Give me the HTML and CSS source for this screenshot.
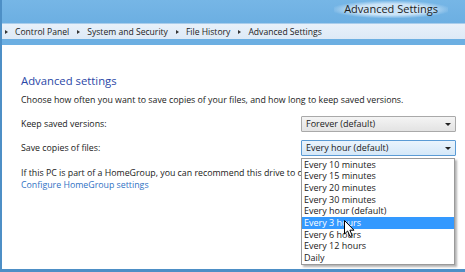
FILE: index.html
```
<!DOCTYPE html>
<html lang="en">
<head>
  <meta charset="UTF-8">
  <title>Advanced Settings</title>
  <link rel="stylesheet" href="styles.css">
</head>
<body>
  <div class="window">
    <div class="titlebar">
      <div class="title">Advanced Settings</div>
    </div>
    <div class="crumbs">
      <span class="arrow"></span><span>Control Panel</span>
      <span class="arrow"></span><span>System and Security</span>
      <span class="arrow"></span><span>File History</span>
      <span class="arrow"></span><span>Advanced Settings</span>
    </div>
    <div class="strip"></div>

    <div class="content">
      <h1>Advanced settings</h1>
      <p class="intro">Choose how often you want to save copies of your files, and how long to keep saved versions.</p>

      <div class="row">
        <span class="label">Keep saved versions:</span>
        <div class="select">Forever (default)<span class="caret"></span></div>
      </div>

      <div class="row">
        <span class="label">Save copies of files:</span>
        <div class="select open">Every hour (default)<span class="caret"></span>
          <!-- open dropdown, drawn over the text below -->
          <ul class="list">
            <li>Every 10 minutes</li>
            <li>Every 15 minutes</li>
            <li>Every 20 minutes</li>
            <li>Every 30 minutes</li>
            <li>Every hour (default)</li>
            <li class="hover">Every 3 hours</li>
            <li>Every 6 hours</li>
            <li>Every 12 hours</li>
            <li>Daily</li>
          </ul>
          <svg class="cursor" width="12" height="18" viewBox="0 0 12 18">
            <path d="M0.5 0.5 L0.5 14 L3.6 11 L6 16.5 L8.2 15.5 L5.9 10.2 L10 10.2 Z" fill="#fff" stroke="#000" stroke-width="1"/>
          </svg>
        </div>
      </div>

      <p class="homegroup">If this PC is part of a HomeGroup, you can recommend this drive to other HomeGroup members.</p>
      <a class="link" href="#">Configure HomeGroup settings</a>
    </div>
  </div>
</body>
</html>
```

FILE: styles.css
```
body {
  margin: 0;
  width: 465px;
  height: 272px;
  overflow: hidden;
  font-family: "Open Sans", "Noto Sans", sans-serif;
  font-size: 8.8px;
  color: #1a1a1a;
  background: #fff;
}
.window {
  height: 269px;
  border-left: 2px solid #4d8fc6;
  border-bottom: 3px solid #4d8fc6;
  background: #fff;
  overflow: hidden;
}
.titlebar {
  height: 23px;
  background: linear-gradient(#76b6e6, #6cafe2);
  display: flex;
  justify-content: flex-end;
  align-items: flex-start;
  padding-right: 17px;
}
.title {
  margin-top: 1px;
  font-size: 11px;
  line-height: 16px;
  color: #1c1c1c;
  padding: 0 10px 1px;
  background: radial-gradient(ellipse at center, rgba(214, 234, 250, 0.9) 45%, rgba(214, 234, 250, 0) 75%);
}
.crumbs {
  height: 15px;
  background: linear-gradient(#e8f1fa, #dde9f6);
  border-top: 1px solid #a9cdec;
  display: flex;
  align-items: center;
  padding-left: 3px;
  font-size: 8.6px;
  color: #1c1c1c;
}
.crumbs span {
  margin-right: 8px;
}
.crumbs .arrow {
  width: 0;
  height: 0;
  border-top: 2.5px solid transparent;
  border-bottom: 2.5px solid transparent;
  border-left: 3px solid #333;
  margin-right: 7px;
}
.strip {
  height: 6px;
  background: #6cafe2;
}
.content {
  padding: 27px 0 0 19px;
}
h1 {
  margin: 0;
  font-size: 11.3px;
  font-weight: normal;
  color: #2a47a6;
  line-height: 17px;
}
.intro {
  margin: 5px 0 0;
  line-height: 12px;
}
.row {
  display: grid;
  grid-template-columns: 280px 155px;
  align-items: center;
  height: 16px;
  margin-top: 10px;
}
.row + .row {
  margin-top: 8px;
}
.select {
  position: relative;
  height: 14px;
  line-height: 14px;
  padding-left: 4px;
  font-size: 9px;
  border: 1px solid #a9a9a9;
  border-radius: 1px;
  background: linear-gradient(#f4f4f4, #e3e3e3);
}
.select.open {
  border-color: #5a9bd5;
  background: linear-gradient(#eaf4fd, #d5e8f8);
}
.caret {
  position: absolute;
  right: 4px;
  top: 6px;
  border-left: 3px solid transparent;
  border-right: 3px solid transparent;
  border-top: 3px solid #222;
}
.list {
  position: absolute;
  left: -1px;
  top: 16.5px;
  width: 152px;
  margin: 0;
  padding: 0;
  list-style: none;
  background: #fff;
  border: 1px solid #9a9a9a;
  box-shadow: 2px 2px 2px rgba(0, 0, 0, 0.3);
  z-index: 2;
}
.list li {
  height: 11.7px;
  line-height: 11.7px;
  padding-left: 2px;
}
.list li.hover {
  background: #3399ff;
  color: #fff;
}
.cursor {
  position: absolute;
  left: 42px;
  top: 79px;
  z-index: 3;
}
.homegroup {
  margin: 11px 0 0;
  line-height: 12px;
  white-space: nowrap;
}
.link {
  color: #2f72c4;
  text-decoration: none;
  line-height: 12px;
}
```
